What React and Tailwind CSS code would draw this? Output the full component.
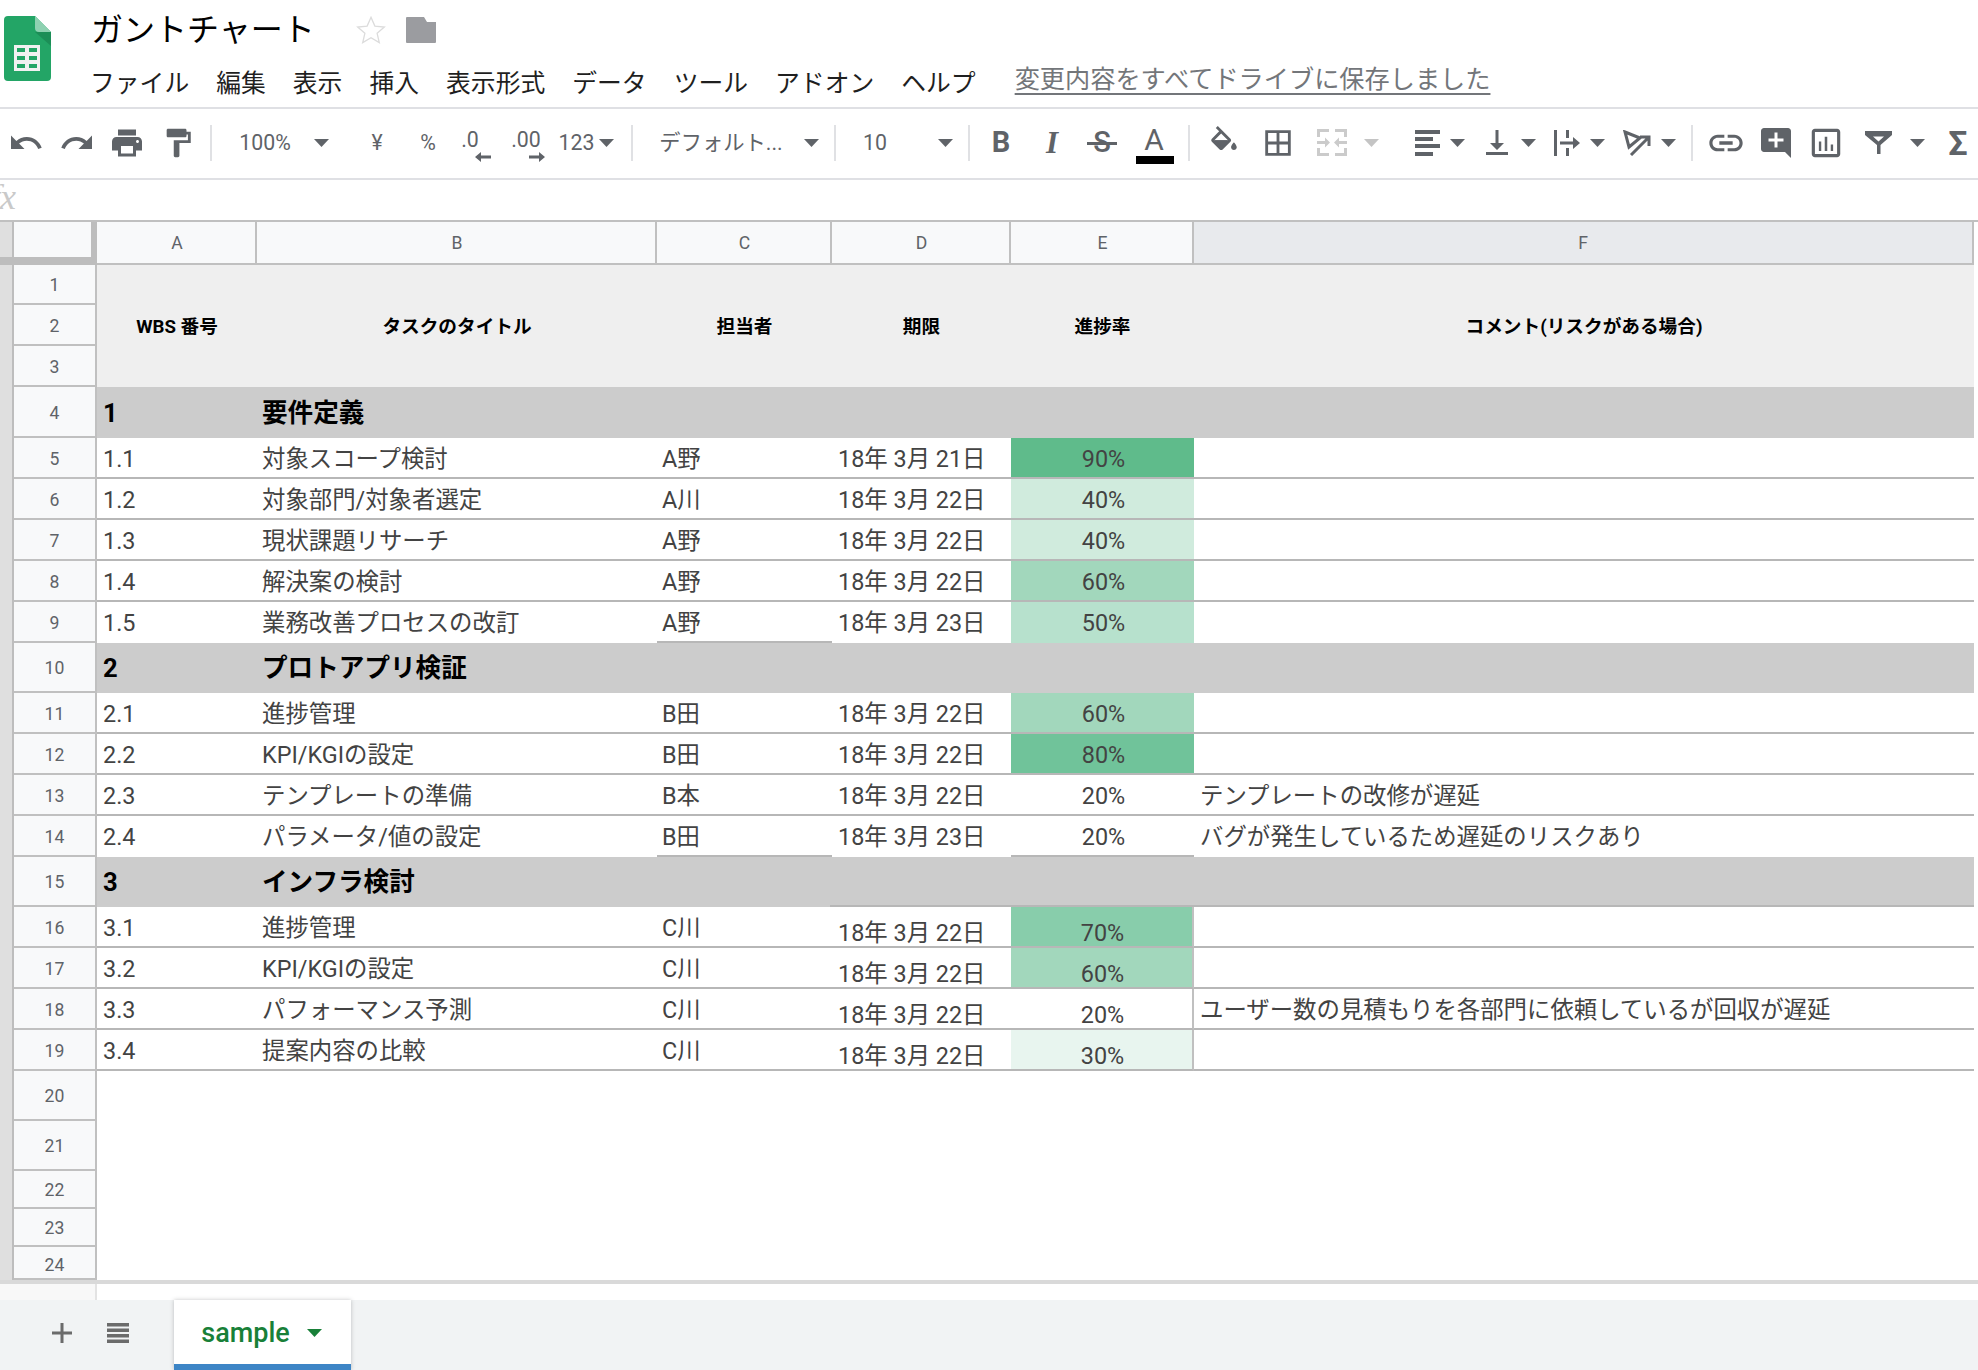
import React from 'react';

const FONT = "font-['Roboto','Noto_Sans_CJK_JP',sans-serif]";

const d = (t) => `18年 3月 ${t}日`;

// rows in sheet order. before = columns that keep their rule above a section band
const ROWS = [
  { n: 4, h: 'h-[51px]', section: true, a: '1', b: '要件定義' },
  { n: 5, h: 'h-[41px]', a: '1.1', b: '対象スコープ検討', c: 'A野', d: d(21), e: '90%', heat: 'bg-[#5fbb8b]' },
  { n: 6, h: 'h-[41px]', a: '1.2', b: '対象部門/対象者選定', c: 'A川', d: d(22), e: '40%', heat: 'bg-[#d0ebdd]' },
  { n: 7, h: 'h-[41px]', a: '1.3', b: '現状課題リサーチ', c: 'A野', d: d(22), e: '40%', heat: 'bg-[#d0ebdd]' },
  { n: 8, h: 'h-[41px]', a: '1.4', b: '解決案の検討', c: 'A野', d: d(22), e: '60%', heat: 'bg-[#a2d7bc]' },
  { n: 9, h: 'h-[41px]', a: '1.5', b: '業務改善プロセスの改訂', c: 'A野', d: d(23), e: '50%', heat: 'bg-[#b7e1cd]', before: 'c' },
  { n: 10, h: 'h-[50px]', section: true, a: '2', b: 'プロトアプリ検証' },
  { n: 11, h: 'h-[41px]', a: '2.1', b: '進捗管理', c: 'B田', d: d(22), e: '60%', heat: 'bg-[#a2d7bc]' },
  { n: 12, h: 'h-[41px]', a: '2.2', b: 'KPI/KGIの設定', c: 'B田', d: d(22), e: '80%', heat: 'bg-[#70c39a]' },
  { n: 13, h: 'h-[41px]', a: '2.3', b: 'テンプレートの準備', c: 'B本', d: d(22), e: '20%', f: 'テンプレートの改修が遅延' },
  { n: 14, h: 'h-[41px]', a: '2.4', b: 'パラメータ/値の設定', c: 'B田', d: d(23), e: '20%', f: 'バグが発生しているため遅延のリスクあり', before: 'ce' },
  { n: 15, h: 'h-[50px]', section: true, a: '3', b: 'インフラ検討', ruled: true },
  { n: 16, h: 'h-[41px]', low: true, a: '3.1', b: '進捗管理', c: 'C川', d: d(22), e: '70%', heat: 'bg-[#88cdab]' },
  { n: 17, h: 'h-[41px]', low: true, a: '3.2', b: 'KPI/KGIの設定', c: 'C川', d: d(22), e: '60%', heat: 'bg-[#a2d7bc]' },
  { n: 18, h: 'h-[41px]', low: true, a: '3.3', b: 'パフォーマンス予測', c: 'C川', d: d(22), e: '20%', f: 'ユーザー数の見積もりを各部門に依頼しているが回収が遅延' },
  { n: 19, h: 'h-[41px]', low: true, a: '3.4', b: '提案内容の比較', c: 'C川', d: d(22), e: '30%', heat: 'bg-[#e8f5ef]' },
];

const HEADERS = [
  { t: 'WBS 番号', w: 'w-[160px]' },
  { t: 'タスクのタイトル', w: 'w-[400px]' },
  { t: '担当者', w: 'w-[175px]' },
  { t: '期限', w: 'w-[179px]' },
  { t: '進捗率', w: 'w-[183px]' },
  { t: 'コメント(リスクがある場合)', w: 'w-[780px]' },
];

const MENU = ['ファイル', '編集', '表示', '挿入', '表示形式', 'データ', 'ツール', 'アドオン', 'ヘルプ'];

function Ico({ size = 'w-[36px] h-[36px]', vb = '0 0 24 24', fill = '#5f6368', children }) {
  return <svg viewBox={vb} className={size} fill={fill}>{children}</svg>;
}

function Caret({ className = '', color = 'fill-[#5f6368]' }) {
  return (
    <div className={`flex h-full shrink-0 items-center justify-center ${className}`}>
      <svg viewBox="0 0 15 8" className={`h-[8px] w-[15px] ${color}`}><path d="M0 0h15L7.5 8z" /></svg>
    </div>
  );
}

function Sep({ className = '' }) {
  return (
    <div className={`flex h-full shrink-0 items-center justify-center ${className}`}>
      <div className="h-[36px] w-[2px] bg-[#e0e1e4]" />
    </div>
  );
}

function Box({ className = '', children }) {
  return <div className={`flex h-full shrink-0 items-center justify-center text-[#5f6368] ${className}`}>{children}</div>;
}

function Logo() {
  return (
    <svg viewBox="0 0 47 65" className="h-[65px] w-[47px]">
      <path d="M4 0h27l16 16v45a4 4 0 0 1-4 4H4a4 4 0 0 1-4-4V4a4 4 0 0 1 4-4z" fill="#23a566" />
      <path d="M31 16l16 14V16z" fill="#1c8e57" />
      <path d="M31 0l16 16H35a4 4 0 0 1-4-4z" fill="#8ed1b1" />
      <path d="M10 29h26v26H10z" fill="#f1f1f1" />
      <path d="M13 32h8v4h-8zM25 32h8v4h-8zM13 40h8v4h-8zM25 40h8v4h-8zM13 48h8v4h-8zM25 48h8v4h-8z" fill="#23a566" />
    </svg>
  );
}

function TopBar() {
  return (
    <header className="flex h-[109px] shrink-0 border-b-2 border-[#dfe0e4]">
      <div className="ml-[4px] mt-[16px] w-[87px] shrink-0"><Logo /></div>
      <div className="flex min-w-0 flex-1 flex-col">
        <div className="flex h-[58px] items-center pt-[2px]">
          <span className="text-[32px] leading-none text-black">ガントチャート</span>
          <svg viewBox="0 0 24 24" className="ml-[40px] h-[32px] w-[32px]" fill="none" stroke="#dcdcdc" strokeWidth="1">
            <path d="M12 2.5l2.900 6.600 7.100.7-5.400 4.700 1.600 7-6.200-3.700-6.200 3.700 1.600-7L2 9.800l7.100-.7z" />
          </svg>
          <svg viewBox="0 0 30 26" className="ml-[19px] h-[26px] w-[30px]" fill="#9b9ca0">
            <path d="M1 0h17l3 5h9v20a1 1 0 0 1-1 1H1a1 1 0 0 1-1-1V1a1 1 0 0 1 1-1z" />
          </svg>
        </div>
        <div className="mt-[14px] flex items-center">
          <nav className="-ml-[1px] flex gap-[27px] text-[24.8px] leading-none text-[#1f1f1f]">
            {MENU.map((m) => <span key={m}>{m}</span>)}
          </nav>
          <span className="ml-[39px] -translate-y-[5px] text-[25.2px] leading-none text-[#73767a] underline decoration-2 underline-offset-[5px]">
            変更内容をすべてドライブに保存しました
          </span>
        </div>
      </div>
    </header>
  );
}

function Toolbar() {
  return (
    <div className="flex h-[71px] shrink-0 items-center overflow-hidden border-b-2 border-[#dfe0e4] pb-[2px] text-[21.3px] leading-none">
      <Box className="w-[52px]">
        <Ico><path d="M12.500 8c-2.650 0-5.050.990-6.900 2.600L2 7v9h9l-3.620-3.620c1.390-1.160 3.160-1.880 5.120-1.880 3.540 0 6.550 2.310 7.600 5.500l2.370-.780C21.080 11.030 17.150 8 12.500 8z" /></Ico>
      </Box>
      <Box className="w-[50px]">
        <Ico><path d="M18.400 10.600C16.550 8.990 14.150 8 11.500 8c-4.650 0-8.580 3.030-9.960 7.220L3.900 16c1.050-3.190 4.050-5.500 7.600-5.500 1.950 0 3.730.720 5.120 1.880L13 16h9V7l-3.600 3.600z" /></Ico>
      </Box>
      <Box className="w-[50px]">
        <Ico><path d="M19 8H5c-1.660 0-3 1.340-3 3v6h4v4h12v-4h4v-6c0-1.660-1.340-3-3-3zm-3 11H8v-5h8v5zm3-7c-.550 0-1-.450-1-1s.450-1 1-1 1 .450 1 1-.450 1-1 1zm-1-9H6v4h12V3z" /></Ico>
      </Box>
      <Box className="w-[52px]">
        <Ico size="w-[34px] h-[34px]"><path d="M18 4V3c0-.550-.450-1-1-1H5c-.550 0-1 .450-1 1v4c0 .550.450 1 1 1h12c.550 0 1-.450 1-1V6h1v4H9v11c0 .550.450 1 1 1h2c.550 0 1-.450 1-1v-9h8V4h-3z" /></Ico>
      </Box>
      <Sep className="w-[14px]" />
      <Box className="w-[94px]">100%</Box>
      <Caret className="w-[18px]" />
      <Box className="ml-[22px] w-[50px]">¥</Box>
      <Box className="w-[52px]">%</Box>
      <Box className="relative w-[32px]">
        <span className="-translate-y-[3px]">.0</span>
        <svg viewBox="0 0 16 10" className="absolute left-[21px] top-[43px] h-[10px] w-[16px]" fill="#5f6368"><path d="M0 5l6-5v3.500h10v3H6V10z" /></svg>
      </Box>
      <Box className="relative ml-[12px] w-[56px]">
        <span className="-translate-y-[3px]">.00</span>
        <svg viewBox="0 0 16 10" className="absolute left-[31px] top-[43px] h-[10px] w-[16px]" fill="#5f6368"><path d="M16 5l-6-5v3.500H0v3h10V10z" /></svg>
      </Box>
      <Box className="ml-[2px] w-[41px]">123</Box>
      <Caret className="w-[18px]" />
      <Sep className="ml-[10px] w-[14px]" />
      <Box className="ml-[11px] w-[142px]">デフォルト...</Box>
      <Caret className="ml-[10px] w-[18px]" />
      <Sep className="ml-[8px] w-[14px]" />
      <Box className="ml-[13px] w-[40px]">10</Box>
      <Caret className="ml-[41px] w-[18px]" />
      <Sep className="ml-[8px] w-[14px]" />
      <Box className="w-[50px] text-[29px] font-bold">B</Box>
      <Box className="ml-[1px] w-[50px] font-['Liberation_Serif',serif] text-[31px] font-bold italic">I</Box>
      <Box className="relative w-[50px] text-[29px] font-medium">
        S
        <div className="absolute left-[10px] top-[33px] h-[3px] w-[30px] bg-[#5f6368]" />
      </Box>
      <Box className="relative ml-[2px] w-[50px]">
        <span className="-translate-y-[3px] text-[30px]">A</span>
        <div className="absolute left-[7px] top-[47px] h-[8px] w-[38px] bg-black" />
      </Box>
      <Sep className="ml-[3px] w-[14px]" />
      <Box className="ml-[3px] w-[50px]">
        <Ico size="w-[34px] h-[34px]">
          <path d="M16.560 8.940 7.620 0 6.210 1.410l2.380 2.380-5.150 5.150c-.590.590-.590 1.540 0 2.120l5.500 5.500c.290.290.680.440 1.060.440s.770-.150 1.060-.440l5.500-5.500c.590-.580.590-1.530 0-2.120zM5.210 10 10 5.210 14.790 10H5.210zM19 11.500s-2 2.170-2 3.500c0 1.100.900 2 2 2s2-.900 2-2c0-1.330-2-3.500-2-3.500z" />
          <path d="M5.210 10h9.580L10 14.790z" />
        </Ico>
      </Box>
      <Box className="ml-[4px] w-[50px]">
        <Ico size="w-[34px] h-[34px]"><path d="M3 3v18h18V3H3zm8 16H5v-6h6v6zm0-8H5V5h6v6zm8 8h-6v-6h6v6zm0-8h-6V5h6v6z" /></Ico>
      </Box>
      <Box className="ml-[4px] w-[50px]">
        <svg viewBox="0 0 30 27" className="h-[27px] w-[30px]" fill="none" stroke="#cbcbcb" strokeWidth="3">
          <path d="M1.500 8V1.500H12M18 1.500h10.500V8M1.500 19v6.500H12M18 25.500h10.500V19M0 13.500h8M22 13.500h8" />
          <path d="M8 8.500l5 5-5 5zM22 8.500l-5 5 5 5z" fill="#cbcbcb" stroke="none" />
        </svg>
      </Box>
      <Caret className="ml-[5px] w-[18px]" color="fill-[#c4c4c4]" />
      <Box className="ml-[27px] w-[40px]">
        <svg viewBox="0 0 25 26" className="h-[26px] w-[25px]" fill="#5f6368"><path d="M0 0h25v4H0zM0 7h18v4H0zM0 14h25v4H0zM0 22h18v4H0z" /></svg>
      </Box>
      <Caret className="ml-[1px] w-[18px]" />
      <Box className="ml-[11px] w-[40px]">
        <svg viewBox="0 0 22 25" className="h-[25px] w-[22px]" fill="#5f6368"><path d="M9.500 0h3v13H18l-7 7-7-7h5.500zM0 22h22v3H0z" /></svg>
      </Box>
      <Caret className="ml-[2px] w-[18px]" />
      <Box className="ml-[10px] w-[40px]">
        <svg viewBox="0 0 26 26" className="h-[26px] w-[26px]" fill="#5f6368"><path d="M0 0h3v26H0zM12 0h3v8h-3zM12 18h3v8h-3zM6 11.500h13V7l7 6-7 6v-4.500H6z" /></svg>
      </Box>
      <Caret className="ml-[1px] w-[18px]" />
      <Box className="ml-[11px] w-[40px]">
        <svg viewBox="0 0 28 26" className="h-[26px] w-[28px]" fill="none" stroke="#5f6368" strokeWidth="3">
          <path d="M2 2l15 6-11 9zM8 25L26 7M17 7h9v9" />
        </svg>
      </Box>
      <Caret className="ml-[2px] w-[18px]" />
      <Sep className="ml-[8px] w-[14px]" />
      <Box className="ml-[2px] w-[50px]">
        <Ico size="w-[40px] h-[40px]"><path d="M3.900 12c0-1.710 1.390-3.100 3.100-3.100h4V7H7c-2.760 0-5 2.240-5 5s2.240 5 5 5h4v-1.900H7c-1.710 0-3.100-1.390-3.100-3.100zM8 13h8v-2H8v2zm9-6h-4v1.900h4c1.710 0 3.100 1.390 3.100 3.100s-1.390 3.100-3.100 3.100h-4V17h4c2.760 0 5-2.240 5-5s-2.240-5-5-5z" /></Ico>
      </Box>
      <Box className="w-[50px]">
        <Ico><path d="M21.990 4c0-1.100-.890-2-1.990-2H4c-1.100 0-2 .900-2 2v12c0 1.100.900 2 2 2h14l4 4-.010-18zM17 11h-4v4h-2v-4H7V9h4V5h2v4h4v2z" /></Ico>
      </Box>
      <Box className="w-[50px]">
        <Ico size="w-[38px] h-[38px]"><path d="M9 17H7.500v-6H9v6zm3.800 0h-1.600V8h1.600v9zm3.700 0H15v-4h1.500v4zm2.500 2H5V5h14v14zm0-16H5c-1.100 0-2 .900-2 2v14c0 1.100.900 2 2 2h14c1.100 0 2-.900 2-2V5c0-1.100-.900-2-2-2z" /></Ico>
      </Box>
      <Box className="ml-[2px] w-[50px]">
        <svg viewBox="0 0 27 23" className="h-[23px] w-[27px]" fill="#5f6368" fillRule="evenodd"><path d="M0 0h27v4l-11.500 10v9h-3.500v-9L0 4zM8 5.500l5.500 5 5.500-5z" /></svg>
      </Box>
      <Caret className="ml-[5px] w-[18px]" />
      <Box className="ml-[12px] w-[40px] text-[34px] font-bold">Σ</Box>
    </div>
  );
}

function FormulaBar() {
  return (
    <div className="relative h-[40px] shrink-0 overflow-hidden">
      <span className="absolute left-[-10px] top-[-1px] font-['Liberation_Serif',serif] text-[36px] italic leading-none text-[#c9c9c9]">fx</span>
    </div>
  );
}

function RowNum({ n, h }) {
  return (
    <div className={`flex w-[83px] shrink-0 items-center justify-center border-r-2 border-b-2 border-[#c0c0c0] bg-[#f8f9fa] pt-[4px] text-[17.6px] leading-none text-[#5f6368] ${h}`}>
      {n}
    </div>
  );
}

function Strip({ h }) {
  return <div className={`w-[14px] shrink-0 border-r-2 border-[#bdbdbd] bg-[#dfdfdf] ${h}`} />;
}

function ColHeaders() {
  const cols = [
    { l: 'A', w: 'w-[160px]' }, { l: 'B', w: 'w-[400px]' }, { l: 'C', w: 'w-[175px]' },
    { l: 'D', w: 'w-[179px]' }, { l: 'E', w: 'w-[183px]' },
  ];
  return (
    <div className="flex h-[45px] shrink-0 border-t-2 border-[#c0c0c0]">
      <div className="w-[97px] shrink-0 border-b-[8px] border-[#bdbdbd] bg-[#dfdfdf] pl-[12px]">
        <div className="h-full border-l-2 border-r-[6px] border-[#bdbdbd] bg-[#f8f9fa]" />
      </div>
      {cols.map((c) => (
        <div key={c.l} className={`flex shrink-0 items-center justify-center border-r-2 border-b-2 border-[#c0c0c0] bg-[#f8f9fa] pl-[2px] pt-[2px] text-[17.6px] leading-none text-[#5f6368] ${c.w}`}>
          {c.l}
        </div>
      ))}
      <div className="flex w-[780px] shrink-0 items-center justify-center border-r-2 border-b-2 border-[#c0c0c0] bg-[#e8eaed] pt-[2px] text-[17.6px] leading-none text-[#5f6368]">
        F
      </div>
    </div>
  );
}

function TitleBlock() {
  return (
    <div className="flex shrink-0">
      <div className="flex flex-col">
        {[1, 2, 3].map((n) => (
          <div key={n} className="flex">
            <Strip h={n === 1 ? 'h-[40px]' : 'h-[41px]'} />
            <RowNum n={n} h={n === 1 ? 'h-[40px]' : 'h-[41px]'} />
          </div>
        ))}
      </div>
      <div className="flex w-[1877px] bg-[#efefef] pt-[2px] text-[18.67px] font-bold leading-none text-black">
        {HEADERS.map((c) => (
          <div key={c.t} className={`flex shrink-0 items-center justify-center ${c.w}`}>{c.t}</div>
        ))}
      </div>
    </div>
  );
}

function SectionRow({ r }) {
  return (
    <div className="flex shrink-0">
      <Strip h={r.h} />
      <RowNum n={r.n} h={r.h} />
      <div className="flex w-[1877px] bg-[#cccccc] text-[25.6px] font-bold leading-none text-black">
        <div className="flex w-[160px] shrink-0 items-center pl-[6px] pt-[2px]">{r.a}</div>
        <div className="flex w-[573px] shrink-0 items-center pl-[5px] pt-[2px]">{r.b}</div>
        <div className={`flex-1 ${r.ruled ? 'border-b-2 border-[#b7b7b7]' : ''}`} />
      </div>
    </div>
  );
}

function DataRow({ r, next }) {
  // the rule under a row disappears into a section band except where `before` says otherwise
  const plain = next === 'section';
  const rule = (col) => (!plain || (r.before || '').includes(col) ? 'border-b-2 border-[#b7b7b7]' : 'border-b-2 border-transparent');
  const top = r.low ? 'pt-[15px]' : 'pt-[4px]';
  return (
    <div className="flex shrink-0 text-[23.4px] leading-none text-[#434343]">
      <Strip h={r.h} />
      <RowNum n={r.n} h={r.h} />
      <div className={`flex w-[160px] shrink-0 items-center pl-[6px] pt-[4px] ${r.h} ${rule('a')}`}>{r.a}</div>
      <div className={`flex w-[400px] shrink-0 items-center pl-[5px] pt-[4px] ${r.h} ${rule('b')}`}>{r.b}</div>
      <div className={`flex w-[175px] shrink-0 items-center pl-[5px] pt-[4px] ${r.h} ${rule('c')}`}>{r.c}</div>
      <div className={`flex w-[179px] shrink-0 items-center pl-[6px] ${r.h} ${rule('d')} ${top}`}>{r.d}</div>
      <div className={`flex w-[183px] shrink-0 items-center justify-center pl-[2px] ${r.h} ${rule('e')} ${top} ${r.heat || ''} ${r.low ? 'border-r-2 border-r-[#c0c0c0]' : ''}`}>{r.e}</div>
      <div className={`flex w-[780px] shrink-0 items-center pl-[6px] pt-[4px] ${r.h} ${rule('f')}`}>{r.f}</div>
    </div>
  );
}

function BlankRow({ n, h }) {
  return (
    <div className="flex shrink-0">
      <Strip h={h} />
      <RowNum n={n} h={h} />
    </div>
  );
}

function BottomBar() {
  return (
    <div className="mt-auto flex h-[70px] shrink-0 bg-[#f1f3f4]">
      <div className="flex w-[174px] items-center pb-[4px]">
        <svg viewBox="0 0 20 20" className="ml-[52px] h-[20px] w-[20px]" fill="#6b6b6b"><path d="M8.500 0h3v8.500H20v3h-8.500V20h-3v-8.500H0v-3h8.500z" /></svg>
        <svg viewBox="0 0 22 20" className="ml-[35px] h-[20px] w-[22px]" fill="#6b6b6b"><path d="M0 0h22v3.500H0zM0 5.500h22v3.500H0zM0 11h22v3.500H0zM0 16.500h22v3.500H0z" /></svg>
      </div>
      <div className="flex w-[177px] flex-col bg-white shadow-[0_0_4px_rgba(60,64,67,0.3)]">
        <div className="flex flex-1 items-center justify-center gap-[17px] pr-[2px] pt-[2px] font-medium text-[#188038]">
          <span className="text-[27px] leading-none">sample</span>
          <svg viewBox="0 0 15 8" className="h-[8px] w-[15px] fill-[#188038]"><path d="M0 0h15L7.500 8z" /></svg>
        </div>
        <div className="h-[6px] bg-[#3d85c6]" />
      </div>
    </div>
  );
}

export default function App() {
  return (
    <div className={`flex h-[1370px] w-full flex-col overflow-hidden bg-white ${FONT}`}>
      <TopBar />
      <Toolbar />
      <FormulaBar />
      <ColHeaders />
      <TitleBlock />
      {ROWS.map((r, i) =>
        r.section
          ? <SectionRow key={r.n} r={r} />
          : <DataRow key={r.n} r={r} next={ROWS[i + 1]?.section ? 'section' : ''} />
      )}
      <BlankRow n={20} h="h-[50px]" />
      <BlankRow n={21} h="h-[50px]" />
      <BlankRow n={22} h="h-[38px]" />
      <BlankRow n={23} h="h-[38px]" />
      <BlankRow n={24} h="h-[33px] pt-[6px]" />
      <div className="h-[4px] shrink-0 bg-[#d9d9d9]" />
      <div className="h-[16px] w-[97px] shrink-0 border-r-2 border-[#e3e3e3] bg-[#f8f8f8]" />
      <BottomBar />
    </div>
  );
}
